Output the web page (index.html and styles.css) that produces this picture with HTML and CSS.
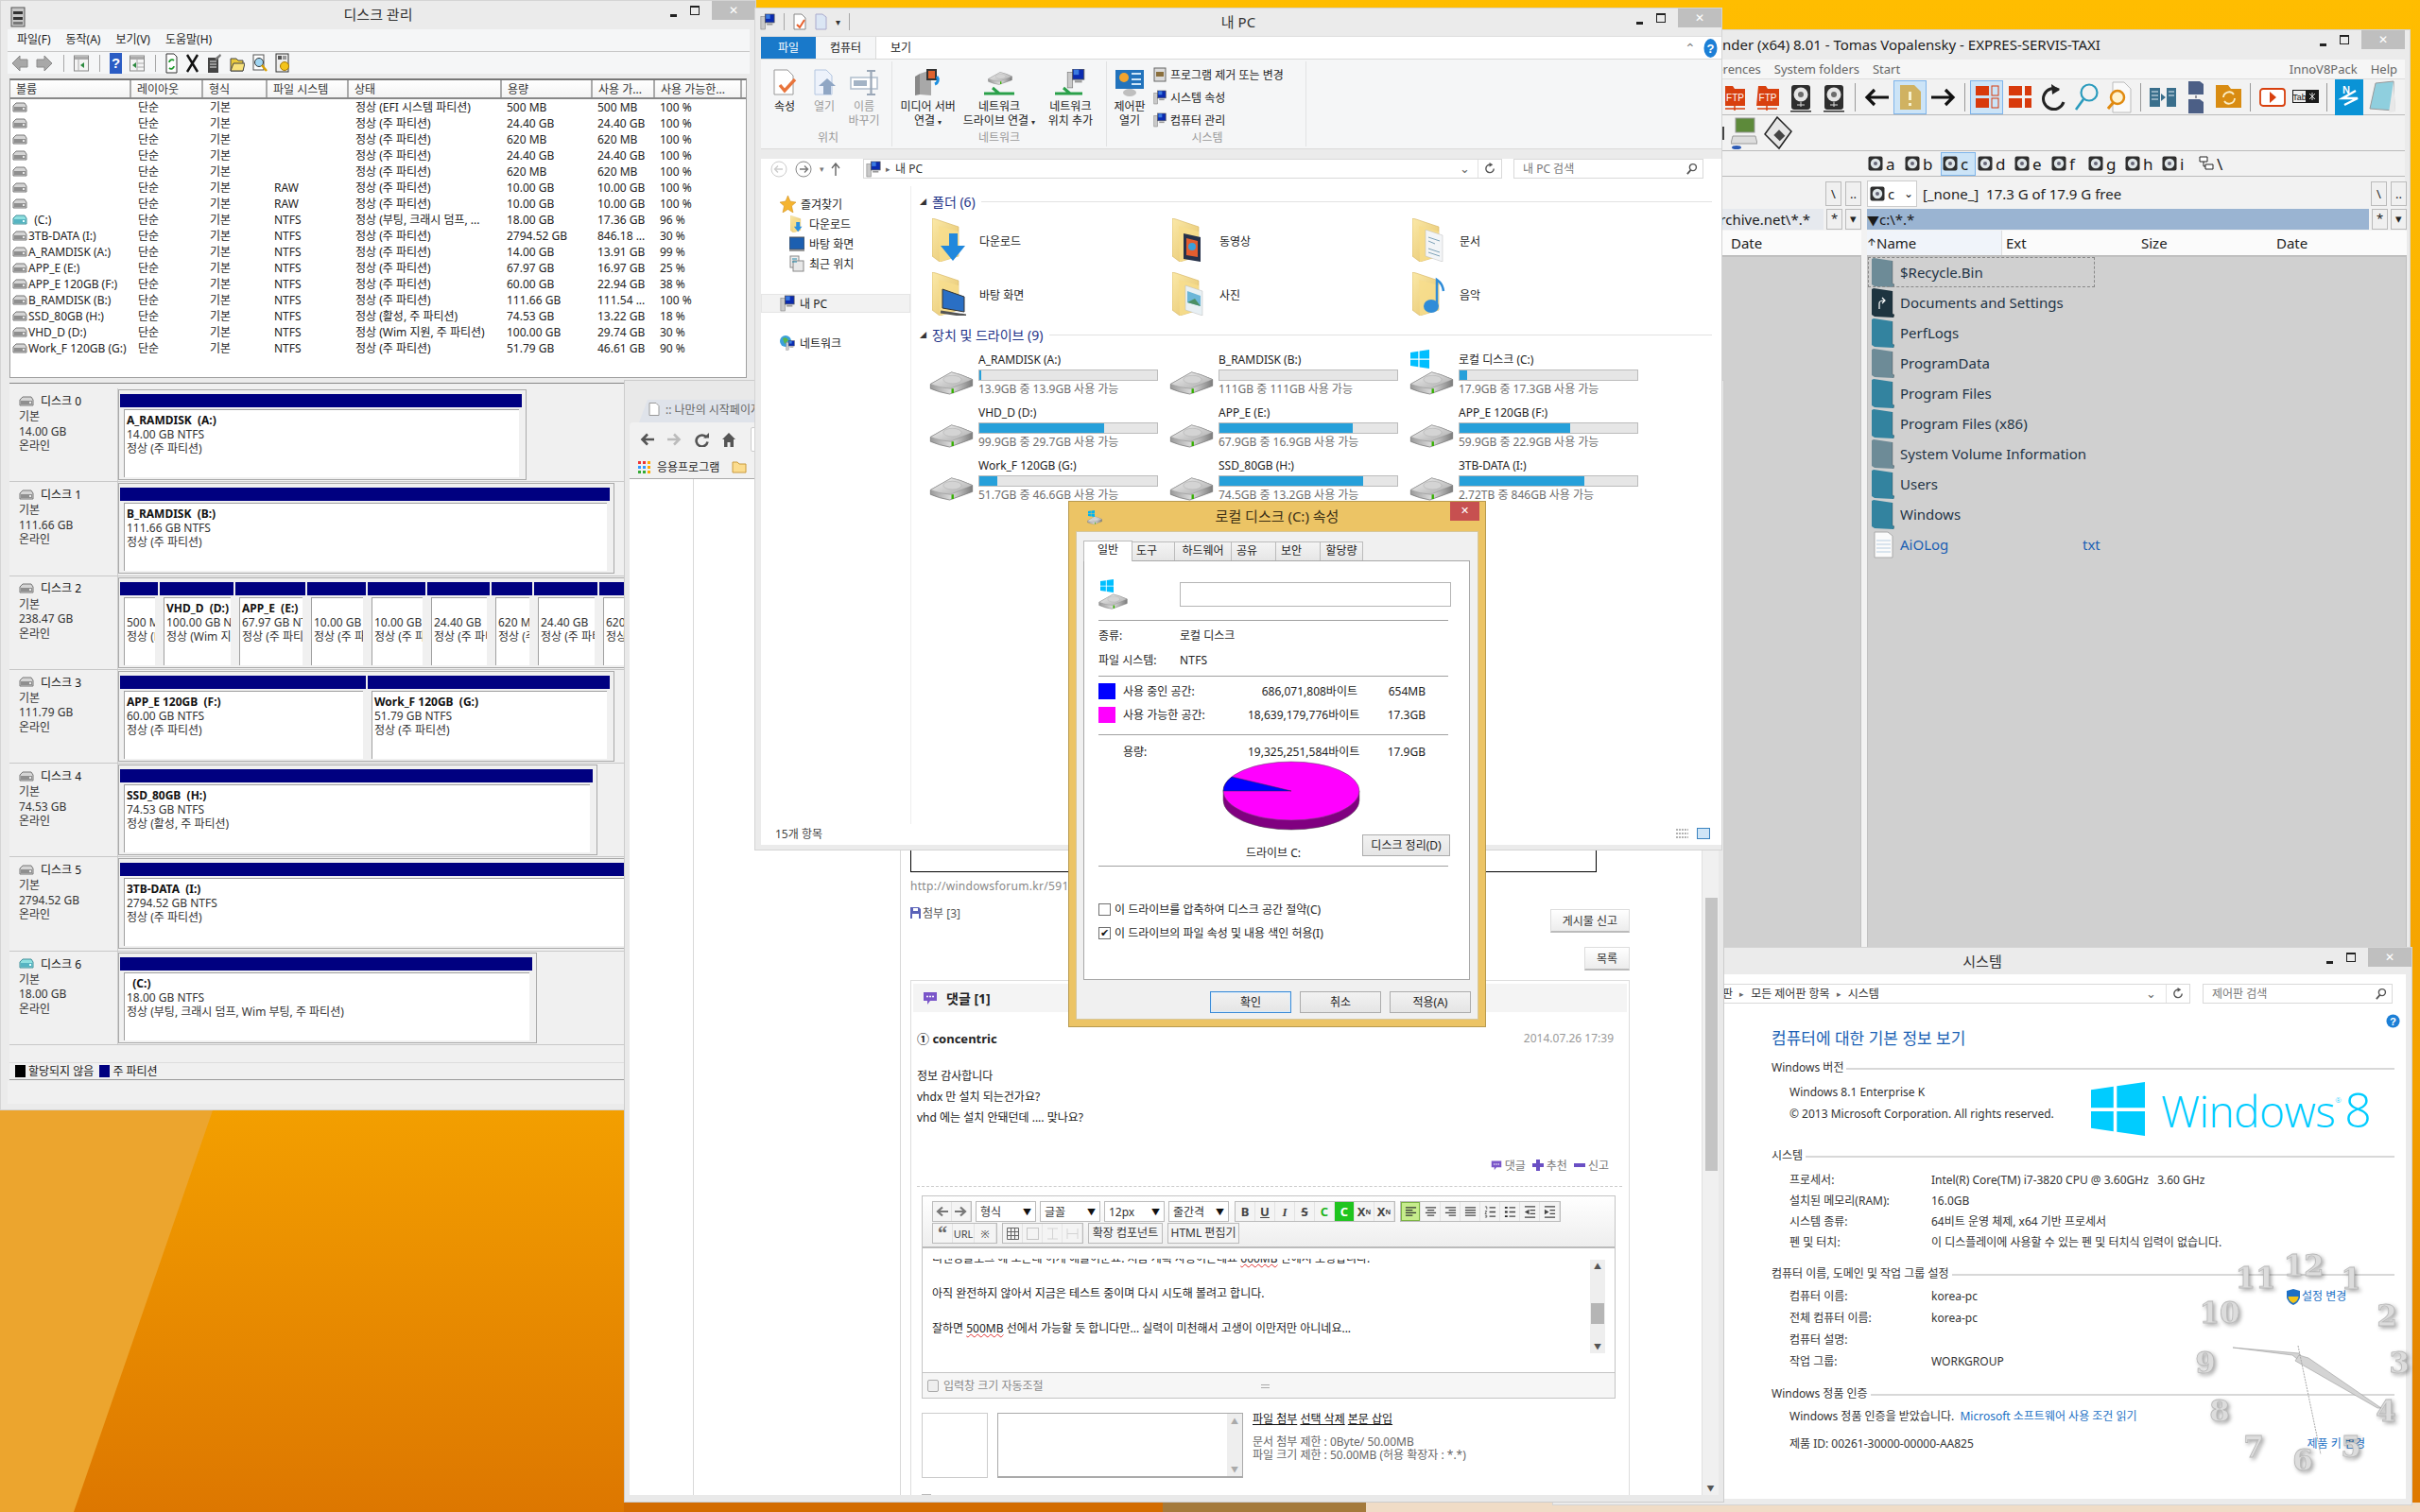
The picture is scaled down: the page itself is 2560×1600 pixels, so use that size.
FILE: index.html
```html
<!DOCTYPE html>
<html lang="ko">
<head>
<meta charset="utf-8">
<title>Desktop</title>
<link rel="stylesheet" href="styles.css">
</head>
<body>
<svg class="defs" width="0" height="0" aria-hidden="true">
  <defs>
    <linearGradient id="gTop" x1="0" y1="0" x2="1" y2="1"><stop offset="0" stop-color="#f4f4f4"/><stop offset="1" stop-color="#a9a9a9"/></linearGradient>
    <linearGradient id="gSide" x1="0" y1="0" x2="1" y2="0"><stop offset="0" stop-color="#9a9a9a"/><stop offset=".5" stop-color="#dcdcdc"/><stop offset="1" stop-color="#7d7d7d"/></linearGradient>
    <linearGradient id="gFold" x1="0" y1="0" x2="1" y2="1"><stop offset="0" stop-color="#fbe9a8"/><stop offset="1" stop-color="#e4c26a"/></linearGradient>
    <symbol id="drive" viewBox="0 0 48 28">
      <path d="M1 16 L24 3 Q34 5 47 11 L47 18 L22 27 Q10 25 1 21Z" fill="url(#gSide)" stroke="#6b6b6b" stroke-width=".7"/>
      <path d="M1 16 L24 3 Q34 5 47 11 L23 21 Q10 20 1 16Z" fill="url(#gTop)" stroke="#8a8a8a" stroke-width=".5"/>
      <ellipse cx="25" cy="11" rx="10" ry="4.5" fill="#d4d4d4" stroke="#aaa" stroke-width=".5"/>
      <rect x="24" y="21" width="2.5" height="5" fill="#35b000"/>
    </symbol>
    <symbol id="wlogo" viewBox="0 0 48 48">
      <path d="M0 7 L20 4 V23 H0Z M23 3.500 L48 0 V23 H23Z M0 26 H20 V44 L0 41Z M23 26 H48 V48 L23 44.500Z"/>
    </symbol>
    <symbol id="hdds" viewBox="0 0 16 12">
      <path d="M1 4 L4 1 H13 L15 4 V10 H1Z" fill="#d5d5d5" stroke="#777"/>
      <rect x="2" y="5" width="12" height="4" fill="#8f8f8f"/><rect x="11" y="6" width="2" height="2" fill="#e8e8e8"/>
    </symbol>
    <symbol id="hddc" viewBox="0 0 16 12">
      <path d="M1 4 L4 1 H13 L15 4 V10 H1Z" fill="#8fe0e0" stroke="#3e8e9a"/>
      <rect x="2" y="5" width="12" height="4" fill="#56b4c2"/><rect x="11" y="6" width="2" height="2" fill="#e8ffff"/>
    </symbol>
    <symbol id="folder" viewBox="0 0 36 46">
      <path d="M0 0 L4 1 L28 9 V40 L8 46 L0 40Z" fill="url(#gFold)" stroke="#d3b25e" stroke-width=".6"/>
      <path d="M7 8 L28 14 V40 L8 46Z" fill="#f7dd8c" opacity=".85"/>
    </symbol>
    <symbol id="tcfolder" viewBox="0 0 24 31">
      <path d="M0 1 L2 0 L22 3 V27 L24 28 L23 31 L3 30 L0 28Z" fill="currentColor"/>
      <path d="M22 3 V27 L24 28 L23 31" fill="none" stroke="#111" stroke-opacity=".25"/>
    </symbol>
    <symbol id="hddb" viewBox="0 0 22 28">
      <rect x="1" y="1" width="20" height="26" rx="3" fill="#2e2e2e"/>
      <circle cx="11" cy="11" r="7.500" fill="#e6e6e6"/><circle cx="11" cy="11" r="3" fill="#6b6b6b"/>
      <path d="M7 22 H15 M11 19 V24" stroke="#ddd"/>
    </symbol>
    <symbol id="hddm" viewBox="0 0 16 16">
      <rect x=".5" y=".5" width="15" height="15" rx="2" fill="#2f2f2f"/>
      <circle cx="8" cy="8" r="5.200" fill="#dfe6e8"/><circle cx="8" cy="8" r="2" fill="#667"/>
    </symbol>
    <symbol id="a-l" viewBox="0 0 14 14"><path d="M1 2 H13 M1 5 H9 M1 8 H13 M1 11 H9" stroke="#333" stroke-width="1.400" fill="none"/></symbol>
    <symbol id="a-c" viewBox="0 0 14 14"><path d="M1 2 H13 M3 5 H11 M1 8 H13 M3 11 H11" stroke="#444" stroke-width="1.400" fill="none"/></symbol>
    <symbol id="a-r" viewBox="0 0 14 14"><path d="M1 2 H13 M5 5 H13 M1 8 H13 M5 11 H13" stroke="#444" stroke-width="1.400" fill="none"/></symbol>
    <symbol id="a-j" viewBox="0 0 14 14"><path d="M1 2 H13 M1 5 H13 M1 8 H13 M1 11 H13" stroke="#444" stroke-width="1.400" fill="none"/></symbol>
    <symbol id="a-o" viewBox="0 0 14 14"><path d="M6 2 H13 M6 7 H13 M6 12 H13" stroke="#444" stroke-width="1.400" fill="none"/><path d="M1 1 H3 V4 M1 6 H3 L1 9 H3 M1 11 H3 V13 H1" stroke="#444" fill="none" stroke-width=".8"/></symbol>
    <symbol id="a-u" viewBox="0 0 14 14"><path d="M6 2 H13 M6 7 H13 M6 12 H13" stroke="#444" stroke-width="1.400" fill="none"/><path d="M1 1 H4 V3 H1Z M1 6 H4 V8 H1Z M1 11 H4 V13 H1Z" fill="#222"/></symbol>
    <symbol id="a-d" viewBox="0 0 14 14"><path d="M1 1 H13 M7 5 H13 M7 9 H13 M1 13 H13" stroke="#444" stroke-width="1.200" fill="none"/><path d="M6 4 L1 7 L6 10Z" fill="#444"/></symbol>
    <symbol id="a-i" viewBox="0 0 14 14"><path d="M1 1 H13 M7 5 H13 M7 9 H13 M1 13 H13" stroke="#444" stroke-width="1.200" fill="none"/><path d="M1 4 L6 7 L1 10Z" fill="#444"/></symbol>
    <symbol id="pc" viewBox="0 0 18 20">
      <rect x="1" y="4" width="5" height="15" fill="#c9c9c9" stroke="#777" stroke-width=".6"/>
      <rect x="6" y="1" width="11" height="10" fill="#0a2bb0" stroke="#555" stroke-width=".8"/>
      <rect x="7" y="1.500" width="5" height="5" fill="#3a7ae0"/><rect x="8" y="12" width="7" height="2" fill="#999"/>
    </symbol>
    <symbol id="search" viewBox="0 0 14 14"><circle cx="8.500" cy="5.500" r="3.800" fill="none" stroke="#555" stroke-width="1.500"/><path d="M6 8.500 L2 13" stroke="#555" stroke-width="2"/></symbol>
    <symbol id="refresh" viewBox="0 0 14 14"><path d="M11 7 A4.500 4.500 0 1 1 7 2.500" fill="none" stroke="#555" stroke-width="1.500"/><path d="M6 0 L10 2.500 L6 5Z" fill="#555"/></symbol>
    <symbol id="bubble" viewBox="0 0 16 16"><path d="M1 2 H15 V11 H8 L5 15 V11 H1Z" fill="#7a55c9"/><circle cx="5" cy="6.500" r="1" fill="#fff"/><circle cx="8" cy="6.500" r="1" fill="#fff"/><circle cx="11" cy="6.500" r="1" fill="#fff"/></symbol>
    <symbol id="help" viewBox="0 0 16 16"><circle cx="8" cy="8" r="7.500" fill="#1c7fd6"/><text x="8" y="12.500" text-anchor="middle" font-size="12" font-weight="700" fill="#fff" font-family="Liberation Sans">?</text></symbol>
  </defs>
</svg>

<main class="desktop">
  <svg class="wallpaper" viewBox="0 0 2560 1600" aria-hidden="true">
    <defs><linearGradient id="wall" x1="0" y1="0" x2="0" y2="1"><stop offset="0" stop-color="#ffbd00"/><stop offset=".72" stop-color="#f4a100"/><stop offset="1" stop-color="#dd7700"/></linearGradient></defs>
    <rect width="2560" height="1600" fill="url(#wall)"/>
    <path d="M0 1175 H225 L78 1600 H0Z" fill="#eca52e"/>
    <rect x="660" y="1590" width="570" height="10" fill="#d36c00"/>
    <rect x="1230" y="1590" width="215" height="10" fill="#a47a3c"/>
    <rect x="1445" y="1590" width="1115" height="10" fill="#f0dcc6"/>
  </svg>

  <!-- Total Commander -->
  <section class="win win-tc">
    <header class="tc-cap">
      <span class="tc-title">Total Commander (x64) 8.01 - Tomas Vopalensky - EXPRES-SERVIS-TAXI</span>
      <span class="capbtns"><i class="cb-min"></i><i class="cb-max"></i><i class="cb-close">✕</i></span>
    </header>
    <nav class="tc-menu"><span>Files</span><span>Mark</span><span>Preferences</span><span>System folders</span><span>Start</span><span class="grow"></span><span>InnoV8Pack</span><span>Help</span></nav>
    <div class="tc-tools">
      <span class="tool"><svg width="24" height="30" viewBox="0 0 24 30"><path d="M2 3 H10 L12 6 H23 V24 H2Z" fill="#d8400e"/><text x="12.500" y="19" text-anchor="middle" font-size="10" fill="#fff" font-family="Liberation Sans">FTP</text><path d="M2 27 H23 M12 24 V29" stroke="#d8400e" stroke-width="1.500"/></svg></span>
      <span class="tool"><svg width="26" height="30" viewBox="0 0 26 30"><path d="M3 3 H11 L13 6 H25 V24 H1Z" fill="#d8400e"/><text x="13" y="19" text-anchor="middle" font-size="10" fill="#fff" font-family="Liberation Sans">FTP</text><path d="M2 27 H23 M12 24 V29" stroke="#d8400e" stroke-width="1.500"/></svg></span>
      <span class="tool"><svg width="22" height="32"><use href="#hddb"/><rect y="30" width="22" height="1.500" fill="#333"/></svg></span>
      <span class="tool"><svg width="22" height="32"><use href="#hddb"/><rect y="30" width="22" height="1.500" fill="#333"/></svg></span>
      <span class="tsep"></span>
      <span class="tool"><svg width="27" height="20" viewBox="0 0 27 20"><path d="M26 10 H3 M11 2 L3 10 L11 18" fill="none" stroke="#111" stroke-width="3.200"/></svg></span>
      <span class="tool on"><svg width="24" height="28" viewBox="0 0 24 28"><path d="M1 1 H16 L23 8 V27 H1Z" fill="#d0b261"/><path d="M10 8 H13 V17 H10Z M10 20 H13 V23 H10Z" fill="#f7f2d0"/></svg></span>
      <span class="tool"><svg width="27" height="20" viewBox="0 0 27 20"><path d="M1 10 H24 M16 2 L24 10 L16 18" fill="none" stroke="#111" stroke-width="3.200"/></svg></span>
      <span class="tsep"></span>
      <span class="tool on"><svg width="26" height="26" viewBox="0 0 26 26"><rect x="1" y="1" width="14" height="10" fill="#d83a0c"/><rect x="1" y="14" width="14" height="10" fill="#d83a0c"/><rect x="18" y="1" width="7" height="10" fill="none" stroke="#d83a0c"/><rect x="18" y="14" width="7" height="10" fill="none" stroke="#d83a0c"/></svg></span>
      <span class="tool"><svg width="26" height="26" viewBox="0 0 26 26"><rect x="1" y="1" width="14" height="10" fill="#d83a0c"/><rect x="1" y="14" width="14" height="10" fill="#d83a0c"/><rect x="18" y="1" width="7" height="10" fill="#d83a0c"/><rect x="18" y="14" width="7" height="10" fill="#d83a0c"/></svg></span>
      <span class="tool"><svg width="27" height="30" viewBox="0 0 27 30"><path d="M20 7 A11 11 0 1 0 25 20" fill="none" stroke="#222" stroke-width="3"/><path d="M12 1 L21 7 L13 12Z" fill="#222"/></svg></span>
      <span class="tool"><svg width="26" height="32" viewBox="0 0 26 32"><circle cx="16" cy="11" r="8.500" fill="none" stroke="#2a9bbd" stroke-width="2.200"/><path d="M10 18 L2 29" stroke="#2a9bbd" stroke-width="2.600"/></svg></span>
      <span class="tool"><svg width="26" height="34" viewBox="0 0 26 34"><path d="M6 1 H18 L25 8 V33 H6Z" fill="#fafafa" stroke="#bbb"/><circle cx="11" cy="17" r="7" fill="#fff3d0" stroke="#e08a10" stroke-width="2.500"/><path d="M7 22 L1 29" stroke="#e08a10" stroke-width="3"/></svg></span>
      <span class="tsep"></span>
      <span class="tool"><svg width="30" height="24" viewBox="0 0 30 24"><rect x="1" y="2" width="11" height="20" fill="#3a6f8c"/><rect x="19" y="2" width="10" height="20" fill="#3a6f8c"/><path d="M3 6 H10 M3 10 H10 M3 14 H10 M21 6 H27 M21 10 H27" stroke="#e4eef4"/><path d="M13 8 L18 12 L13 16Z" fill="#3a6f8c"/></svg></span>
      <span class="tool"><svg width="20" height="36" viewBox="0 0 20 36"><path d="M2 1 H14 L18 4 V15 H2Z M2 20 H14 L18 23 V35 H2Z" fill="#4c5f86"/><path d="M10 16 V19" stroke="#334"/></svg></span>
      <span class="tool"><svg width="30" height="32" viewBox="0 0 30 32"><path d="M1 3 H14 L17 7 H28 V27 H1Z" fill="#d98c12"/><path d="M9 16 A6 6 0 0 1 20 13 M21 17 A6 6 0 0 1 10 20" fill="none" stroke="#fbeec6" stroke-width="1.800"/></svg></span>
      <span class="tsep"></span>
      <span class="tool"><svg width="28" height="22" viewBox="0 0 28 22"><rect x="1" y="2" width="26" height="18" rx="3" fill="#fff" stroke="#d8400e" stroke-width="1.800"/><path d="M11 5 L18 11 L11 17Z" fill="#d8400e"/></svg></span>
      <span class="tool"><svg width="28" height="16" viewBox="0 0 28 16"><rect width="28" height="14" fill="#1a1a1a"/><rect x="1" y="1" width="13" height="12" fill="#eee"/><text x="7.500" y="11" text-anchor="middle" font-size="9" font-family="Liberation Sans" fill="#111">Tab</text><path d="M18 4 L24 10 M24 4 L18 10 M21 3 V11" stroke="#ddd"/></svg></span>
      <span class="tsep"></span>
      <span class="tool"><svg width="30" height="38" viewBox="0 0 30 38"><rect width="30" height="38" fill="#0a93d6"/><text x="8" y="15" font-size="11" font-weight="700" fill="#fff" font-family="Liberation Sans">N</text><path d="M22 12 L8 20 H24 L10 27" fill="none" stroke="#fff" stroke-width="2.500"/></svg></span>
      <span class="tool"><svg width="30" height="36" viewBox="0 0 30 36"><path d="M8 3 L27 1 L28 32 L2 30Z" fill="#8fcfde" stroke="#999"/><path d="M27 1 L29 33 L22 34" fill="#e8e8e8"/></svg></span>
    </div>
    <div class="tc-tools2">
      <span class="tool"><svg width="4" height="14"><rect width="4" height="14" fill="#444"/></svg></span>
      <span class="tool2"><svg width="28" height="34" viewBox="0 0 28 34"><rect x="5" y="1" width="20" height="15" fill="#5d8a3a" stroke="#999"/><path d="M2 20 H26 L28 28 H0Z" fill="#ddd" stroke="#999"/><ellipse cx="6" cy="32" rx="5" ry="2" fill="#2d5bb5"/></svg></span>
      <span class="tool2"><svg width="30" height="36" viewBox="0 0 30 36"><path d="M14 1 L29 16 L16 34 L1 19Z" fill="#e6e6e6" stroke="#222" stroke-width="1.500"/><rect x="12" y="16" width="9" height="8" fill="#444" transform="rotate(45 16 20)"/></svg></span>
    </div>
    <div class="tc-drives">
      <span class="drv"><svg width="16" height="16"><use href="#hddm"/></svg>a</span>
      <span class="drv"><svg width="16" height="16"><use href="#hddm"/></svg>b</span>
      <span class="drv on"><svg width="16" height="16"><use href="#hddm"/></svg>c</span>
      <span class="drv"><svg width="16" height="16"><use href="#hddm"/></svg>d</span>
      <span class="drv"><svg width="16" height="16"><use href="#hddm"/></svg>e</span>
      <span class="drv"><svg width="16" height="16"><use href="#hddm"/></svg>f</span>
      <span class="drv"><svg width="16" height="16"><use href="#hddm"/></svg>g</span>
      <span class="drv"><svg width="16" height="16"><use href="#hddm"/></svg>h</span>
      <span class="drv"><svg width="16" height="16"><use href="#hddm"/></svg>i</span>
      <span class="drv"><svg width="16" height="16" viewBox="0 0 16 16"><path d="M1 1 H9 V6 H1Z M7 9 H15 V14 H7Z M5 6 V11 H7" fill="#fff" stroke="#222"/></svg>\</span>
    </div>
    <div class="tc-panels">
      <section class="tc-panel tc-left">
        <div class="tc-pathrow"><span class="grow"></span><span class="sq">\</span><span class="sq">..</span></div>
        <div class="tc-pathbar"><span class="tc-path off">ftp://web.archive.net\*.*</span><span class="sq">*</span><span class="sq">▾</span></div>
        <div class="tc-cols left-cols"><span>Date</span></div>
        <div class="tc-list"></div>
      </section>
      <section class="tc-panel tc-right">
        <div class="tc-pathrow"><span class="tc-combo"><svg width="16" height="16"><use href="#hddm"/></svg>c<em>⌄</em></span><span class="tc-free">[_none_]&nbsp; 17.3 G of 17.9 G free</span><span class="grow"></span><span class="sq">\</span><span class="sq">..</span></div>
        <div class="tc-pathbar"><span class="tc-path"><b>▼</b>c:\*.*</span><span class="sq">*</span><span class="sq">▾</span></div>
        <div class="tc-cols right-cols"><span class="sorted"><b>🡩</b>Name</span><span>Ext</span><span>Size</span><span>Date</span></div>
        <div class="tc-list">
          <div class="tc-row focus"><svg class="gr" width="24" height="31"><use href="#tcfolder"/></svg>$Recycle.Bin</div>
          <div class="tc-row"><svg class="dk" width="24" height="31"><use href="#tcfolder"/><path d="M8 22 V16 Q8 13 13 13 M11 10 L14 13 L11 16" fill="none" stroke="#fff" stroke-width="1.200"/></svg>Documents and Settings</div>
          <div class="tc-row"><svg class="tl" width="24" height="31"><use href="#tcfolder"/></svg>PerfLogs</div>
          <div class="tc-row"><svg class="gr" width="24" height="31"><use href="#tcfolder"/></svg>ProgramData</div>
          <div class="tc-row"><svg class="tl" width="24" height="31"><use href="#tcfolder"/></svg>Program Files</div>
          <div class="tc-row"><svg class="tl" width="24" height="31"><use href="#tcfolder"/></svg>Program Files (x86)</div>
          <div class="tc-row"><svg class="gr" width="24" height="31"><use href="#tcfolder"/></svg>System Volume Information</div>
          <div class="tc-row"><svg class="tl" width="24" height="31"><use href="#tcfolder"/></svg>Users</div>
          <div class="tc-row"><svg class="tl" width="24" height="31"><use href="#tcfolder"/></svg>Windows</div>
          <div class="tc-row file"><svg width="24" height="31" viewBox="0 0 24 31"><path d="M3 2 H17 L22 6 V29 H3Z" fill="#fbfbfb" stroke="#aaa"/><path d="M5 11 H20 M5 15 H20 M5 19 H20 M5 23 H20" stroke="#b7cde0"/></svg><span class="tc-name">AiOLog</span><span class="tc-ext">txt</span></div>
        </div>
      </section>
    </div>
  </section>

  <!-- System -->
  <section class="win win-sys">
    <header class="cap sys-cap">
      <span></span><span class="cap-title">시스템</span>
      <span class="capbtns"><i class="cb-min"></i><i class="cb-max"></i><i class="cb-close">✕</i></span>
    </header>
    <div class="sys-client">
      <div class="sys-addr">
        <div class="sys-crumb"><span>제어판</span><em>▸</em><span>모든 제어판 항목</span><em>▸</em><span>시스템</span><span class="grow"></span><em class="dd">⌄</em><span class="rf"><svg width="13" height="13"><use href="#refresh"/></svg></span></div>
        <div class="sys-search"><span>제어판 검색</span><svg width="13" height="13"><use href="#search"/></svg></div>
      </div>
      <div class="sys-main">
        <div class="sys-h1row"><h1 class="sys-h1">컴퓨터에 대한 기본 정보 보기</h1><svg class="sys-help" width="15" height="17"><use href="#help"/></svg></div>
        <div class="sys-sec s1"><span>Windows 버전</span></div>
        <div class="sys-ver">
          <div class="sys-vertext"><p>Windows 8.1 Enterprise K</p><p>© 2013 Microsoft Corporation. All rights reserved.</p></div>
          <svg class="win8logo" width="57" height="57"><use href="#wlogo"/></svg>
          <span class="win8text">Windows<sup>®</sup><b>8</b></span>
        </div>
        <div class="sys-sec s2"><span>시스템</span></div>
        <dl class="sys-rows tight"><dt>프로세서:</dt><dd>Intel(R) Core(TM) i7-3820 CPU @ 3.60GHz &nbsp; 3.60 GHz</dd><dt>설치된 메모리(RAM):</dt><dd>16.0GB</dd><dt>시스템 종류:</dt><dd>64비트 운영 체제, x64 기반 프로세서</dd><dt>펜 및 터치:</dt><dd>이 디스플레이에 사용할 수 있는 펜 및 터치식 입력이 없습니다.</dd></dl>
        <div class="sys-sec s3"><span>컴퓨터 이름, 도메인 및 작업 그룹 설정</span></div>
        <dl class="sys-rows"><dt>컴퓨터 이름:</dt><dd>korea-pc<a class="sys-link shield"><svg width="14" height="17" viewBox="0 0 14 17"><path d="M7 0 L14 2 V9 Q13 14 7 17 Q1 14 0 9 V2Z" fill="#1e6fc4"/><path d="M7 2 V15 Q2 13 1.500 8 H7Z M7 8 H12.500 Q12 13 7 15Z" fill="#f4c518"/></svg>설정 변경</a></dd><dt>전체 컴퓨터 이름:</dt><dd>korea-pc</dd><dt>컴퓨터 설명:</dt><dd>&nbsp;</dd><dt>작업 그룹:</dt><dd>WORKGROUP</dd></dl>
        <div class="sys-sec s4"><span>Windows 정품 인증</span></div>
        <p class="sys-act">Windows 정품 인증을 받았습니다. &nbsp;<a class="sys-link">Microsoft 소프트웨어 사용 조건 읽기</a></p>
        <p class="sys-pid"><span>제품 ID: 00261-30000-00000-AA825</span><a class="sys-link">제품 키 변경</a></p>
      </div>
    </div>
  </section>

  <!-- Disk management -->
  <section class="win win-disk">
    <header class="cap">
      <span class="cap-ico"><svg width="16" height="24" viewBox="0 0 16 24"><rect x="1" y="2" width="14" height="20" fill="#c8c8c8" stroke="#555"/><rect x="3" y="6" width="10" height="3" fill="#333"/><rect x="3" y="12" width="10" height="3" fill="#333"/><rect x="3" y="17" width="10" height="3" fill="#777"/></svg></span>
      <span class="cap-title">디스크 관리</span>
      <span class="capbtns"><i class="cb-min"></i><i class="cb-max"></i><i class="cb-close">✕</i></span>
    </header>
    <nav class="menubar"><span>파일(F)</span><span>동작(A)</span><span>보기(V)</span><span>도움말(H)</span></nav>
    <div class="dm-tools">
      <svg width="18" height="20" viewBox="0 0 18 20"><path d="M1 10 L9 2 V6 H17 V14 H9 V18Z" fill="#a8a8a8" stroke="#8a8a8a"/></svg>
      <svg width="18" height="20" viewBox="0 0 18 20"><path d="M17 10 L9 2 V6 H1 V14 H9 V18Z" fill="#a8a8a8" stroke="#8a8a8a"/></svg>
      <i class="vs"></i>
      <svg width="16" height="18" viewBox="0 0 16 18"><rect x=".5" y="1" width="15" height="16" fill="#f4f4f4" stroke="#888"/><rect x="1" y="2" width="14" height="3" fill="#aaa"/><path d="M5 5 V17" stroke="#aaa"/><path d="M7 11 L11 8 V14Z" fill="#2b8a3e"/></svg>
      <i class="vs"></i>
      <svg width="13" height="22" viewBox="0 0 13 22"><rect width="13" height="22" fill="#2a5cc4"/><text x="6.500" y="16" text-anchor="middle" font-size="15" font-weight="700" fill="#fff" font-family="Liberation Sans">?</text></svg>
      <svg width="16" height="18" viewBox="0 0 16 18"><rect x=".5" y="1" width="15" height="16" fill="#f4f4f4" stroke="#888"/><rect x="1" y="2" width="14" height="3" fill="#aaa"/><path d="M8 5 V17 M8 9 H15 M8 13 H15" stroke="#aaa"/><path d="M7 8 L3 11 L7 14Z" fill="#2b8a3e"/></svg>
      <i class="vs"></i>
      <svg width="13" height="22" viewBox="0 0 13 22"><path d="M1 1 H9 L12 4 V21 H1Z" fill="#fff" stroke="#333"/><path d="M4 10 A3 3 0 0 1 9 8 M9 14 A3 3 0 0 1 4 16" fill="none" stroke="#1f9b2d" stroke-width="1.800"/></svg>
      <svg width="15" height="22" viewBox="0 0 15 22"><path d="M2 2 L13 20 M13 2 L2 20" stroke="#111" stroke-width="2.400"/></svg>
      <svg width="16" height="22" viewBox="0 0 16 22"><rect x="1" y="5" width="11" height="16" fill="#444"/><path d="M3 9 H10 M3 12 H10 M3 15 H10" stroke="#eee"/><path d="M8 6 L14 1 L15 3 L10 8Z" fill="#777"/></svg>
      <svg width="16" height="20" viewBox="0 0 16 20"><path d="M1 5 H7 L9 7 H14 V18 H1Z" fill="#e9c93a" stroke="#444"/><path d="M1 18 L4 10 H16 L14 18Z" fill="#f8e27a" stroke="#444"/></svg>
      <svg width="16" height="20" viewBox="0 0 16 20"><rect x="1" y="1" width="11" height="16" fill="#fff" stroke="#555"/><circle cx="7" cy="9" r="4.500" fill="#9fd5f2" stroke="#333"/><path d="M10 12 L15 18" stroke="#d9a000" stroke-width="2.400"/></svg>
      <svg width="16" height="22" viewBox="0 0 16 22"><rect x="1" y="1" width="13" height="19" fill="#eee" stroke="#333"/><rect x="3" y="3" width="4" height="4" fill="#555"/><rect x="8" y="3" width="4" height="4" fill="#999"/><circle cx="10" cy="14" r="4.500" fill="#f3c41c" stroke="#a87800"/></svg>
    </div>
    <div class="lv">
      <div class="lv-head lv-grid"><span>볼륨</span><span>레이아웃</span><span>형식</span><span>파일 시스템</span><span>상태</span><span>용량</span><span>사용 가...</span><span>사용 가능한...</span></div>
      <div class="lv-grid lv-row"><span class="vol"><svg width="16" height="12"><use href="#hdds"/></svg></span><span>단순</span><span>기본</span><span></span><span>정상 (EFI 시스템 파티션)</span><span>500 MB</span><span>500 MB</span><span>100 %</span></div>
      <div class="lv-grid lv-row"><span class="vol"><svg width="16" height="12"><use href="#hdds"/></svg></span><span>단순</span><span>기본</span><span></span><span>정상 (주 파티션)</span><span>24.40 GB</span><span>24.40 GB</span><span>100 %</span></div>
      <div class="lv-grid lv-row"><span class="vol"><svg width="16" height="12"><use href="#hdds"/></svg></span><span>단순</span><span>기본</span><span></span><span>정상 (주 파티션)</span><span>620 MB</span><span>620 MB</span><span>100 %</span></div>
      <div class="lv-grid lv-row"><span class="vol"><svg width="16" height="12"><use href="#hdds"/></svg></span><span>단순</span><span>기본</span><span></span><span>정상 (주 파티션)</span><span>24.40 GB</span><span>24.40 GB</span><span>100 %</span></div>
      <div class="lv-grid lv-row"><span class="vol"><svg width="16" height="12"><use href="#hdds"/></svg></span><span>단순</span><span>기본</span><span></span><span>정상 (주 파티션)</span><span>620 MB</span><span>620 MB</span><span>100 %</span></div>
      <div class="lv-grid lv-row"><span class="vol"><svg width="16" height="12"><use href="#hdds"/></svg></span><span>단순</span><span>기본</span><span>RAW</span><span>정상 (주 파티션)</span><span>10.00 GB</span><span>10.00 GB</span><span>100 %</span></div>
      <div class="lv-grid lv-row"><span class="vol"><svg width="16" height="12"><use href="#hdds"/></svg></span><span>단순</span><span>기본</span><span>RAW</span><span>정상 (주 파티션)</span><span>10.00 GB</span><span>10.00 GB</span><span>100 %</span></div>
      <div class="lv-grid lv-row"><span class="vol"><svg width="16" height="12"><use href="#hddc"/></svg>&nbsp;&nbsp;(C:)</span><span>단순</span><span>기본</span><span>NTFS</span><span>정상 (부팅, 크래시 덤프, ...</span><span>18.00 GB</span><span>17.36 GB</span><span>96 %</span></div>
      <div class="lv-grid lv-row"><span class="vol"><svg width="16" height="12"><use href="#hdds"/></svg>3TB-DATA (I:)</span><span>단순</span><span>기본</span><span>NTFS</span><span>정상 (주 파티션)</span><span>2794.52 GB</span><span>846.18 ...</span><span>30 %</span></div>
      <div class="lv-grid lv-row"><span class="vol"><svg width="16" height="12"><use href="#hdds"/></svg>A_RAMDISK (A:)</span><span>단순</span><span>기본</span><span>NTFS</span><span>정상 (주 파티션)</span><span>14.00 GB</span><span>13.91 GB</span><span>99 %</span></div>
      <div class="lv-grid lv-row"><span class="vol"><svg width="16" height="12"><use href="#hdds"/></svg>APP_E (E:)</span><span>단순</span><span>기본</span><span>NTFS</span><span>정상 (주 파티션)</span><span>67.97 GB</span><span>16.97 GB</span><span>25 %</span></div>
      <div class="lv-grid lv-row"><span class="vol"><svg width="16" height="12"><use href="#hdds"/></svg>APP_E 120GB (F:)</span><span>단순</span><span>기본</span><span>NTFS</span><span>정상 (주 파티션)</span><span>60.00 GB</span><span>22.94 GB</span><span>38 %</span></div>
      <div class="lv-grid lv-row"><span class="vol"><svg width="16" height="12"><use href="#hdds"/></svg>B_RAMDISK (B:)</span><span>단순</span><span>기본</span><span>NTFS</span><span>정상 (주 파티션)</span><span>111.66 GB</span><span>111.54 ...</span><span>100 %</span></div>
      <div class="lv-grid lv-row"><span class="vol"><svg width="16" height="12"><use href="#hdds"/></svg>SSD_80GB (H:)</span><span>단순</span><span>기본</span><span>NTFS</span><span>정상 (활성, 주 파티션)</span><span>74.53 GB</span><span>13.22 GB</span><span>18 %</span></div>
      <div class="lv-grid lv-row"><span class="vol"><svg width="16" height="12"><use href="#hdds"/></svg>VHD_D (D:)</span><span>단순</span><span>기본</span><span>NTFS</span><span>정상 (Wim 지원, 주 파티션)</span><span>100.00 GB</span><span>29.74 GB</span><span>30 %</span></div>
      <div class="lv-grid lv-row"><span class="vol"><svg width="16" height="12"><use href="#hdds"/></svg>Work_F 120GB (G:)</span><span>단순</span><span>기본</span><span>NTFS</span><span>정상 (주 파티션)</span><span>51.79 GB</span><span>46.61 GB</span><span>90 %</span></div>
    </div>
    <div class="dm-pane">
      <div class="disk"><div class="disk-info"><b><svg width="16" height="12"><use href="#hdds"/></svg>디스크 0</b><span>기본</span><span>14.00 GB</span><span>온라인</span></div>
        <div class="frame"><div class="part" style="width:425px"><i class="bar"></i><div class="pbox"><b>A_RAMDISK &nbsp;(A:)</b><span>14.00 GB NTFS</span><span>정상 (주 파티션)</span></div></div></div></div>
      <div class="disk"><div class="disk-info"><b><svg width="16" height="12"><use href="#hdds"/></svg>디스크 1</b><span>기본</span><span>111.66 GB</span><span>온라인</span></div>
        <div class="frame"><div class="part" style="width:518px"><i class="bar"></i><div class="pbox"><b>B_RAMDISK &nbsp;(B:)</b><span>111.66 GB NTFS</span><span>정상 (주 파티션)</span></div></div></div></div>
      <div class="disk"><div class="disk-info"><b><svg width="16" height="12"><use href="#hdds"/></svg>디스크 2</b><span>기본</span><span>238.47 GB</span><span>온라인</span></div>
        <div class="frame">
          <div class="part" style="width:40px"><i class="bar"></i><div class="pbox"><b>&nbsp;</b><span>500 MB</span><span>정상 (EFI)</span></div></div>
          <div class="part" style="width:78px"><i class="bar"></i><div class="pbox"><b>VHD_D &nbsp;(D:)</b><span>100.00 GB NTFS</span><span>정상 (Wim 지원)</span></div></div>
          <div class="part" style="width:74px"><i class="bar"></i><div class="pbox"><b>APP_E &nbsp;(E:)</b><span>67.97 GB NTFS</span><span>정상 (주 파티션)</span></div></div>
          <div class="part" style="width:62px"><i class="bar"></i><div class="pbox"><b>&nbsp;</b><span>10.00 GB RAW</span><span>정상 (주 파티션)</span></div></div>
          <div class="part" style="width:61px"><i class="bar"></i><div class="pbox"><b>&nbsp;</b><span>10.00 GB RAW</span><span>정상 (주 파티션)</span></div></div>
          <div class="part" style="width:66px"><i class="bar"></i><div class="pbox"><b>&nbsp;</b><span>24.40 GB</span><span>정상 (주 파티션)</span></div></div>
          <div class="part" style="width:43px"><i class="bar"></i><div class="pbox"><b>&nbsp;</b><span>620 MB</span><span>정상 (주)</span></div></div>
          <div class="part" style="width:67px"><i class="bar"></i><div class="pbox"><b>&nbsp;</b><span>24.40 GB</span><span>정상 (주 파티션)</span></div></div>
          <div class="part" style="width:43px"><i class="bar"></i><div class="pbox"><b>&nbsp;</b><span>620 MB</span><span>정상 (주)</span></div></div>
        </div></div>
      <div class="disk"><div class="disk-info"><b><svg width="16" height="12"><use href="#hdds"/></svg>디스크 3</b><span>기본</span><span>111.79 GB</span><span>온라인</span></div>
        <div class="frame"><div class="part" style="width:260px"><i class="bar"></i><div class="pbox"><b>APP_E 120GB &nbsp;(F:)</b><span>60.00 GB NTFS</span><span>정상 (주 파티션)</span></div></div><div class="part" style="width:256px"><i class="bar"></i><div class="pbox"><b>Work_F 120GB &nbsp;(G:)</b><span>51.79 GB NTFS</span><span>정상 (주 파티션)</span></div></div></div></div>
      <div class="disk"><div class="disk-info"><b><svg width="16" height="12"><use href="#hdds"/></svg>디스크 4</b><span>기본</span><span>74.53 GB</span><span>온라인</span></div>
        <div class="frame"><div class="part" style="width:500px"><i class="bar"></i><div class="pbox"><b>SSD_80GB &nbsp;(H:)</b><span>74.53 GB NTFS</span><span>정상 (활성, 주 파티션)</span></div></div></div></div>
      <div class="disk"><div class="disk-info"><b><svg width="16" height="12"><use href="#hdds"/></svg>디스크 5</b><span>기본</span><span>2794.52 GB</span><span>온라인</span></div>
        <div class="frame"><div class="part" style="width:600px"><i class="bar"></i><div class="pbox"><b>3TB-DATA &nbsp;(I:)</b><span>2794.52 GB NTFS</span><span>정상 (주 파티션)</span></div></div></div></div>
      <div class="disk"><div class="disk-info"><b><svg width="16" height="12"><use href="#hddc"/></svg>디스크 6</b><span>기본</span><span>18.00 GB</span><span>온라인</span></div>
        <div class="frame"><div class="part" style="width:436px"><i class="bar"></i><div class="pbox"><b>&nbsp;&nbsp;(C:)</b><span>18.00 GB NTFS</span><span>정상 (부팅, 크래시 덤프, Wim 부팅, 주 파티션)</span></div></div></div></div>
      <div class="legend"><i class="k"></i><span>할당되지 않음</span><i class="b"></i><span>주 파티션</span></div>
    </div>
    <div class="dm-status"></div>
  </section>

  <!-- Chrome -->
  <section class="win win-chrome">
    <div class="ch-tabs"><div class="ch-tab"><svg width="12" height="14" viewBox="0 0 12 14"><path d="M1 .5 H8 L11 3.500 V13.500 H1Z" fill="#fff" stroke="#999"/></svg><span>:: 나만의 시작페이지 ::</span></div></div>
    <div class="ch-bar">
      <svg width="15" height="14" viewBox="0 0 15 14"><path d="M15 7 H3 M8 1.500 L2.500 7 L8 12.500" fill="none" stroke="#555" stroke-width="2.600"/></svg>
      <svg width="15" height="14" viewBox="0 0 15 14"><path d="M0 7 H12 M7 1.500 L12.500 7 L7 12.500" fill="none" stroke="#bbb" stroke-width="2.600"/></svg>
      <svg width="15" height="15" viewBox="0 0 15 15"><path d="M12.500 5 A6 6 0 1 0 13.500 9.500" fill="none" stroke="#555" stroke-width="2.600"/><path d="M9 5.500 H15 V0Z" fill="#555"/></svg>
      <svg width="14" height="15" viewBox="0 0 14 15"><path d="M7 0 L14 7 H12 V15 H8.500 V10 H5.500 V15 H2 V7 H0Z" fill="#555"/></svg>
      <span class="ch-omni"></span>
    </div>
    <div class="ch-marks">
      <svg width="13" height="13" viewBox="0 0 13 13"><rect width="3" height="3" fill="#e33"/><rect x="5" width="3" height="3" fill="#e33"/><rect x="10" width="3" height="3" fill="#fa0"/><rect y="5" width="3" height="3" fill="#39f"/><rect x="5" y="5" width="3" height="3" fill="#39f"/><rect x="10" y="5" width="3" height="3" fill="#fa0"/><rect y="10" width="3" height="3" fill="#3a3"/><rect x="5" y="10" width="3" height="3" fill="#3a3"/><rect x="10" y="10" width="3" height="3" fill="#fa0"/></svg>
      <span>응용프로그램</span>
      <svg width="16" height="13" viewBox="0 0 16 13"><path d="M1 1 H6 L8 3 H15 V12 H1Z" fill="#fbdc8e" stroke="#c99a3c"/></svg>
    </div>
    <div class="ch-page">
      <div class="col1"></div>
      <div class="col2"></div>
      <div class="forum">
        <div class="quote"></div>
        <div class="url">http://windowsforum.kr/5917163</div>
        <div class="attach"><span class="att"><svg width="11" height="12" viewBox="0 0 11 12"><path d="M0 0 H9 L11 2 V12 H0Z" fill="#5a62b8"/><rect x="3" y="1" width="5" height="3" fill="#fff"/><rect x="2" y="7" width="7" height="5" fill="#fff"/></svg>첨부 [3]</span><span class="pbtn">게시물 신고</span></div>
        <div class="listbtn"><span class="pbtn">목록</span></div>
        <div class="cbox">
          <div class="chead"><svg width="16" height="16"><use href="#bubble"/></svg><b>댓글 [1]</b></div>
          <div class="cuser"><b>① concentric</b><time>2014.07.26 17:39</time></div>
          <div class="ctext"><p>정보 감사합니다</p><p>vhdx 만 설치 되는건가요?</p><p>vhd 에는 설치 안돼던데 .... 맞나요?</p></div>
          <div class="creply"><svg width="12" height="14"><use href="#bubble"/></svg><span>댓글</span><svg width="12" height="12" viewBox="0 0 12 12"><path d="M4 0 H8 V4 H12 V8 H8 V12 H4 V8 H0 V4 H4Z" fill="#6a4fc4"/></svg><span>추천</span><svg width="12" height="12" viewBox="0 0 12 12"><rect y="4" width="12" height="4" fill="#6a4fc4"/></svg><span>신고</span></div>
          <div class="cdots"></div>
          <div class="editor">
            <div class="ed-tool">
              <div class="ed-row">
                <span class="eg"><i class="eb"><svg width="13" height="12" viewBox="0 0 13 12"><path d="M13 6 H3 M7 1.500 L2 6 L7 10.500" fill="none" stroke="#777" stroke-width="2.200"/></svg></i><i class="eb"><svg width="13" height="12" viewBox="0 0 13 12"><path d="M0 6 H10 M6 1.500 L11 6 L6 10.500" fill="none" stroke="#777" stroke-width="2.200"/></svg></i></span>
                <span class="esel">형식<b>▼</b></span><span class="esel">글꼴<b>▼</b></span><span class="esel">12px<b>▼</b></span><span class="esel">줄간격<b>▼</b></span>
                <span class="eg"><i class="eb s">B</i><i class="eb s u">U</i><i class="eb s it">I</i><i class="eb s st">S</i><i class="eb s g">C</i><i class="eb s gb">C</i><i class="eb s">X<sup>N</sup></i><i class="eb s">X<sub>N</sub></i></span>
                <span class="eg"><i class="eb active"><svg width="13" height="13"><use href="#a-l"/></svg></i><i class="eb"><svg width="13" height="13"><use href="#a-c"/></svg></i><i class="eb"><svg width="13" height="13"><use href="#a-r"/></svg></i><i class="eb"><svg width="13" height="13"><use href="#a-j"/></svg></i><i class="eb"><svg width="13" height="13"><use href="#a-o"/></svg></i><i class="eb"><svg width="13" height="13"><use href="#a-u"/></svg></i><i class="eb"><svg width="13" height="13"><use href="#a-d"/></svg></i><i class="eb"><svg width="13" height="13"><use href="#a-i"/></svg></i></span>
              </div>
              <div class="ed-row">
                <span class="eg"><i class="eb s q">“</i><i class="eb t">URL</i><i class="eb t">※</i></span>
                <span class="eg"><i class="eb"><svg width="13" height="13" viewBox="0 0 13 13"><path d="M.5 .5 H12.500 V12.500 H.5Z M.5 4.500 H12.500 M.5 8.500 H12.500 M4.500 .5 V12.500 M8.500 .5 V12.500" fill="none" stroke="#666"/></svg></i><i class="eb dim"><svg width="13" height="13" viewBox="0 0 13 13"><rect x=".5" y=".5" width="12" height="12" fill="none" stroke="#bbb"/></svg></i><i class="eb dim"><svg width="13" height="13" viewBox="0 0 13 13"><path d="M1 1 H12 M1 12 H12 M6.500 1 V12" stroke="#ccc" fill="none"/></svg></i><i class="eb dim"><svg width="13" height="13" viewBox="0 0 13 13"><path d="M1 1 V12 M12 1 V12 M1 6.500 H12" stroke="#ccc" fill="none"/></svg></i></span>
                <span class="eg"><i class="ew w79">확장 컴포넌트</i></span>
                <span class="eg"><i class="ew w76">HTML 편집기</i></span>
              </div>
            </div>
            <div class="ed-area">
              <div class="ed-text"><p>디렌딩블로그 에 오는데 이게 애들이군요. 처음 계획 사용이는데요 <u class="sp">600MB</u> 안에서 포팅합니다.</p><p>&nbsp;</p><p>아직 완전하지 않아서 지금은 테스트 중이며 다시 시도해 볼려고 합니다.</p><p>&nbsp;</p><p>잘하면 <u class="sp">500MB</u> 선에서 가능할 듯 합니다만... 실력이 미천해서 고생이 이만저만 아니네요...</p></div>
              <div class="ed-scroll"><b>▲</b><i></i><b>▼</b></div>
            </div>
            <div class="ed-foot"><label><i class="ck"></i>입력창 크기 자동조절</label><span class="grip"></span></div>
          </div>
          <div class="upload">
            <div class="up-prev"></div>
            <div class="up-list"><span class="up-scroll"><b>▲</b><b>▼</b></span></div>
            <div class="up-info"><p class="up-links"><u>파일 첨부</u> <u>선택 삭제</u> <u>본문 삽입</u></p><p>문서 첨부 제한 : 0Byte/ 50.00MB</p><p>파일 크기 제한 : 50.00MB (허용 확장자 : *.*)</p></div>
          </div>
          <div class="cdash"></div>
        </div>
      </div>
      <div class="ch-scroll"><b>▲</b><i></i><b class="down">▼</b></div>
    </div>
  </section>

  <!-- Explorer -->
  <section class="win win-exp">
    <header class="cap exp-cap">
      <span class="qat">
        <svg width="16" height="18"><use href="#pc"/></svg><i class="vs"></i>
        <svg width="14" height="18" viewBox="0 0 14 18"><path d="M1 1 H9 L13 5 V17 H1Z" fill="#fff" stroke="#888"/><path d="M4 12 L7 15 L12 7" fill="none" stroke="#e8602c" stroke-width="2"/></svg>
        <svg width="13" height="18" viewBox="0 0 13 18"><path d="M1 1 H8 L12 4 V17 H1Z" fill="#dbe6f4" stroke="#aac"/></svg>
        <small>▾</small><i class="vs"></i>
      </span>
      <span class="cap-title">내 PC</span>
      <span class="capbtns"><i class="cb-min"></i><i class="cb-max"></i><i class="cb-close">✕</i></span>
    </header>
    <nav class="rib-tabs"><span class="rt file">파일</span><span class="rt cur">컴퓨터</span><span class="rt">보기</span><span class="grow"></span><small class="rib-up">⌃</small><svg width="15" height="22" viewBox="0 0 15 22"><ellipse cx="7.500" cy="11" rx="7" ry="10" fill="#1c7fd6"/><text x="7.500" y="16" text-anchor="middle" font-size="13" font-weight="700" fill="#fff" font-family="Liberation Sans">?</text></svg></nav>
    <div class="ribbon">
      <section class="rg g1"><div class="rg-btns">
        <span class="rb"><svg width="30" height="29" viewBox="0 0 30 29"><path d="M4 1 H18 L24 7 V27 H4Z" fill="#fff" stroke="#999"/><path d="M10 17 L15 23 L26 11" fill="none" stroke="#e8743b" stroke-width="3.400"/></svg><span>속성</span></span>
        <span class="rb off"><svg width="30" height="29" viewBox="0 0 30 29"><path d="M5 1 H17 L23 7 V27 H5Z" fill="#edf2fb" stroke="#b4c6e0"/><path d="M18 10 L27 18 H22 V27 H14 V18 H9Z" fill="#8fa6c4"/></svg><span>열기</span></span>
        <span class="rb off"><svg width="30" height="29" viewBox="0 0 30 29"><rect x="1" y="9" width="28" height="12" fill="#fff" stroke="#b5c1cf" stroke-width="1.600"/><rect x="4" y="12" width="14" height="6" fill="#a3b3c5"/><path d="M18 2 H27 M18 27 H27 M22.500 2 V27" stroke="#9aa7b7" stroke-width="2.200"/></svg><span>이름<br>바꾸기</span></span>
      </div><footer>위치</footer></section>
      <section class="rg g2"><div class="rg-btns">
        <span class="rb"><svg width="34" height="29" viewBox="0 0 34 29"><path d="M8 5 L20 1 V28 L8 27Z" fill="#a8a8a8"/><path d="M8 5 L3 8 V28 L8 27Z" fill="#888"/><rect x="15" y="0" width="11" height="12" fill="#333"/><rect x="17" y="2" width="7" height="8" fill="#e0622c"/><path d="M26 8 A5 5 0 0 1 24 16" stroke="#1c8fe0" stroke-width="3" fill="none"/></svg><span>미디어 서버<br>연결 <small>▾</small></span></span>
        <span class="rb"><svg width="34" height="29" viewBox="0 0 34 29"><use href="#drive" x="5" y="1" width="26" height="17"/><path d="M1 26 H33 M10 20 L17 26" stroke="#2aa04a" stroke-width="3"/></svg><span>네트워크<br>드라이브 연결 <small>▾</small></span></span>
        <span class="rb"><svg width="34" height="29" viewBox="0 0 34 29"><use href="#pc" x="12" y="-1" width="22" height="22"/><path d="M1 26 H30 M10 20 L17 26" stroke="#2aa04a" stroke-width="3"/></svg><span>네트워크<br>위치 추가</span></span>
      </div><footer>네트워크</footer></section>
      <section class="rg g3"><div class="rg-row">
        <span class="rb w44"><svg width="32" height="29" viewBox="0 0 32 29"><rect x="1" y="1" width="30" height="20" fill="#2273bc"/><circle cx="10" cy="9" r="5" fill="#f3a42d"/><path d="M18 5 H28 M18 11 H28 M18 16 H28" stroke="#cfe6f7" stroke-width="2"/><ellipse cx="16" cy="25" rx="7" ry="4" fill="#bfbfbf"/></svg><span>제어판<br>열기</span></span>
        <ul class="rg-list">
          <li><svg width="14" height="16" viewBox="0 0 14 16"><rect x="1" y="1" width="12" height="14" fill="#dbdbdb" stroke="#666"/><rect x="3" y="5" width="8" height="5" fill="#8a6f3d"/></svg>프로그램 제거 또는 변경</li>
          <li><svg width="14" height="16"><use href="#pc"/></svg>시스템 속성</li>
          <li><svg width="14" height="16"><use href="#pc"/></svg>컴퓨터 관리</li>
        </ul></div><footer>시스템</footer></section>
    </div>
    <div class="exp-addr">
      <span class="navc"><svg width="18" height="18" viewBox="0 0 18 18"><circle cx="9" cy="9" r="8" fill="none" stroke="#ccc"/><path d="M13 9 H5 M8 5.500 L4.500 9 L8 12.500" fill="none" stroke="#ccc" stroke-width="1.400"/></svg><svg width="18" height="18" viewBox="0 0 18 18"><circle cx="9" cy="9" r="8" fill="none" stroke="#888"/><path d="M5 9 H13 M10 5.500 L13.500 9 L10 12.500" fill="none" stroke="#777" stroke-width="1.400"/></svg><small>▾</small><svg width="10" height="14" viewBox="0 0 10 14"><path d="M5 14 V2 M1 6 L5 1 L9 6" fill="none" stroke="#666" stroke-width="1.400"/></svg></span>
      <div class="addr"><svg width="16" height="18"><use href="#pc"/></svg><em>▸</em><span>내 PC</span><span class="grow"></span><em class="dd">⌄</em><span class="rf"><svg width="13" height="13"><use href="#refresh"/></svg></span></div>
      <div class="srch"><span>내 PC 검색</span><svg width="13" height="13"><use href="#search"/></svg></div>
    </div>
    <div class="exp-main">
      <nav class="exp-nav">
        <div class="ni top"><svg width="17" height="18" viewBox="0 0 17 18"><path d="M8.500 0 L11 6 L17 7 L12.500 11 L14 18 L8.500 14.500 L3 18 L4.500 11 L0 7 L6 6Z" fill="#f5b430" stroke="#c98510" stroke-width=".5"/></svg>즐겨찾기</div>
        <div class="ni sub"><svg width="16" height="18" viewBox="0 0 36 46"><use href="#folder" width="36" height="46"/><path d="M16 18 H26 V30 H32 L21 44 L10 30 H16Z" fill="#2b8fe0"/></svg>다운로드</div>
        <div class="ni sub"><svg width="16" height="18" viewBox="0 0 16 18"><rect x="0" y="2" width="16" height="13" fill="#1c5fb0" stroke="#555"/><rect y="15" width="16" height="2" fill="#999"/></svg>바탕 화면</div>
        <div class="ni sub"><svg width="16" height="18" viewBox="0 0 16 18"><rect x="1" y="1" width="9" height="12" fill="#eee" stroke="#888"/><rect x="4" y="6" width="11" height="11" fill="#e8e8e8" stroke="#888"/><path d="M3 4 H8 M3 7 H8" stroke="#28a"/></svg>최근 위치</div>
        <div class="ni pcitem"><svg width="16" height="18"><use href="#pc"/></svg>내 PC</div>
        <div class="ni net"><svg width="16" height="18" viewBox="0 0 16 18"><circle cx="6" cy="7" r="6" fill="#3aa0dc"/><path d="M3 4 Q7 2 9 6 L5 10Z" fill="#5bb64a"/><use href="#pc" x="6" y="6" width="10" height="11"/></svg>네트워크</div>
      </nav>
      <div class="exp-view">
        <h2 class="gh"><i>◢</i><span>폴더 (6)</span></h2>
        <div class="fgrid">
          <div class="fitem"><svg width="36" height="46" viewBox="0 0 36 46"><use href="#folder" width="36" height="46"/><path d="M18 16 H27 V29 H35 L22 45 L9 29 H18Z" fill="#2188dd"/></svg>다운로드</div>
          <div class="fitem"><svg width="36" height="46" viewBox="0 0 36 46"><use href="#folder" width="36" height="46"/><path d="M12 16 L30 20 V46 L12 43Z" fill="#27324a"/><path d="M15 21 L27 24 V41 L15 39Z" fill="#e35d2f"/><circle cx="21" cy="30" r="4" fill="#3aa0dc"/></svg>동영상</div>
          <div class="fitem"><svg width="36" height="46" viewBox="0 0 36 46"><use href="#folder" width="36" height="46"/><path d="M14 12 L32 18 V46 L14 40Z" fill="#f3f5f7" stroke="#bbb" stroke-width=".5"/><path d="M17 20 L29 24 M17 24 L24 27 M17 32 L29 36 M17 36 L29 40" stroke="#7fa3b8"/></svg>문서</div>
          <div class="fitem"><svg width="36" height="46" viewBox="0 0 36 46"><use href="#folder" width="36" height="46"/><path d="M11 18 L34 26 V42 L11 38Z" fill="#2a6fc4" stroke="#333"/><path d="M9 42 L36 46" stroke="#555" stroke-width="3"/></svg>바탕 화면</div>
          <div class="fitem"><svg width="36" height="46" viewBox="0 0 36 46"><use href="#folder" width="36" height="46"/><path d="M14 14 L32 20 V46 L14 40Z" fill="#e8f0f4" stroke="#bbb" stroke-width=".5"/><path d="M16 20 L30 25 V36 L16 32Z" fill="#6cb6d8"/><path d="M16 32 L24 28 L30 36Z" fill="#4a8f64"/></svg>사진</div>
          <div class="fitem"><svg width="36" height="46" viewBox="0 0 36 46"><use href="#folder" width="36" height="46"/><ellipse cx="20" cy="36" rx="8" ry="7" fill="#2f8cd8"/><path d="M26 36 V8 Q32 12 33 20" stroke="#2f8cd8" stroke-width="2.500" fill="none"/></svg>음악</div>
        </div>
        <h2 class="gh g2h"><i>◢</i><span>장치 및 드라이브 (9)</span></h2>
        <div class="dgrid">
          <div class="ditem"><svg width="47" height="27"><use href="#drive"/></svg><div><p>A_RAMDISK (A:)</p><div class="dbar"><i style="width:1%"></i></div><small>13.9GB 중 13.9GB 사용 가능</small></div></div>
          <div class="ditem"><svg width="47" height="27"><use href="#drive"/></svg><div><p>B_RAMDISK (B:)</p><div class="dbar"><i style="width:0"></i></div><small>111GB 중 111GB 사용 가능</small></div></div>
          <div class="ditem cdrive"><span class="cd-ico"><svg class="cd-logo" width="20" height="20"><use href="#wlogo"/></svg><svg width="47" height="27"><use href="#drive"/></svg></span><div><p>로컬 디스크 (C:)</p><div class="dbar"><i style="width:4%"></i></div><small>17.9GB 중 17.3GB 사용 가능</small></div></div>
          <div class="ditem"><svg width="47" height="27"><use href="#drive"/></svg><div><p>VHD_D (D:)</p><div class="dbar"><i style="width:70%"></i></div><small>99.9GB 중 29.7GB 사용 가능</small></div></div>
          <div class="ditem"><svg width="47" height="27"><use href="#drive"/></svg><div><p>APP_E (E:)</p><div class="dbar"><i style="width:75%"></i></div><small>67.9GB 중 16.9GB 사용 가능</small></div></div>
          <div class="ditem"><svg width="47" height="27"><use href="#drive"/></svg><div><p>APP_E 120GB (F:)</p><div class="dbar"><i style="width:62%"></i></div><small>59.9GB 중 22.9GB 사용 가능</small></div></div>
          <div class="ditem"><svg width="47" height="27"><use href="#drive"/></svg><div><p>Work_F 120GB (G:)</p><div class="dbar"><i style="width:10%"></i></div><small>51.7GB 중 46.6GB 사용 가능</small></div></div>
          <div class="ditem"><svg width="47" height="27"><use href="#drive"/></svg><div><p>SSD_80GB (H:)</p><div class="dbar"><i style="width:81%"></i></div><small>74.5GB 중 13.2GB 사용 가능</small></div></div>
          <div class="ditem"><svg width="47" height="27"><use href="#drive"/></svg><div><p>3TB-DATA (I:)</p><div class="dbar"><i style="width:70%"></i></div><small>2.72TB 중 846GB 사용 가능</small></div></div>
        </div>
      </div>
    </div>
    <footer class="exp-status"><span>15개 항목</span><span class="grow"></span><svg width="15" height="12" viewBox="0 0 15 12"><path d="M1 2 H14 M1 6 H14 M1 10 H14" stroke="#666" stroke-dasharray="2 1"/></svg><svg width="14" height="12" viewBox="0 0 14 12"><rect x=".5" y=".5" width="13" height="11" fill="#cfe5f7" stroke="#3b83c0"/></svg></footer>
  </section>

  <!-- Properties dialog -->
  <section class="win-dlg">
    <header class="dlg-cap"><svg class="dlg-capico" width="16" height="16" viewBox="0 0 16 16"><use href="#drive" x="0" y="5" width="16" height="11"/><use href="#wlogo" x="1" y="0" width="7" height="7" fill="#00b4f0"/></svg><span class="dlg-title">로컬 디스크 (C:) 속성</span><i class="dlg-close">✕</i></header>
    <div class="dlg-body">
      <div class="dlg-tabs"><span class="on">일반</span><span>도구</span><span>하드웨어</span><span>공유</span><span>보안</span><span>할당량</span></div>
      <div class="dlg-panel">
        <div class="dlg-name"><span class="dlg-ico"><svg class="cd-logo2" width="14" height="14"><use href="#wlogo"/></svg><svg width="31" height="18"><use href="#drive"/></svg></span><span class="dlg-input"></span></div>
        <hr>
        <div class="dlg-kv"><span>종류:</span><span>로컬 디스크</span></div>
        <div class="dlg-kv kv2"><span>파일 시스템:</span><span class="ntfs">NTFS</span></div>
        <hr class="h2">
        <div class="dlg-use"><i class="sw blue"></i><span>사용 중인 공간:</span><span class="r1">686,071,808바이트</span><span class="r2">654MB</span></div>
        <div class="dlg-use u2"><i class="sw pink"></i><span>사용 가능한 공간:</span><span class="r1">18,639,179,776바이트</span><span class="r2">17.3GB</span></div>
        <hr class="h3">
        <div class="dlg-use u3"><i class="sw none"></i><span>용량:</span><span class="r1">19,325,251,584바이트</span><span class="r2">17.9GB</span></div>
        <div class="dlg-pie">
          <svg class="pie" width="146" height="76" viewBox="0 0 146 76"><path d="M1 32 V42 A72 31 0 0 0 145 42 V32Z" fill="#800080" stroke="#555" stroke-width=".5"/><ellipse cx="73" cy="32" rx="72" ry="31" fill="#ff00ff" stroke="#555" stroke-width=".5"/><path d="M73 32 L10 17 A72 31 0 0 0 1 32Z" fill="#0000ff" stroke="#333" stroke-width=".5"/></svg>
          <div class="pie-foot"><span class="pie-lbl">드라이브 C:</span><span class="wbtn clean">디스크 정리(D)</span></div>
        </div>
        <hr class="h4">
        <label class="dlg-ck c1"><i class="cbx"></i>이 드라이브를 압축하여 디스크 공간 절약(C)</label>
        <label class="dlg-ck"><i class="cbx checked">✔</i>이 드라이브의 파일 속성 및 내용 색인 허용(I)</label>
      </div>
      <div class="dlg-btns"><span class="wbtn def">확인</span><span class="wbtn">취소</span><span class="wbtn">적용(A)</span></div>
    </div>
  </section>

  <!-- Clock gadget -->
  <svg class="clock" width="250" height="260" viewBox="2310 1310 250 260" aria-hidden="true">
    <g class="clock-num" text-anchor="middle">
      <text x="2437" y="1350">12</text><text x="2386" y="1363">11</text><text x="2487" y="1364">1</text><text x="2348" y="1400">10</text><text x="2525" y="1403">2</text><text x="2333" y="1453">9</text><text x="2538" y="1453">3</text><text x="2348" y="1504">8</text><text x="2524" y="1504">4</text><text x="2384" y="1542">7</text><text x="2487" y="1542">5</text><text x="2436" y="1556">6</text>
    </g>
    <g class="clock-hands"><path d="M2362 1426 L2425 1434 L2440 1446 L2432 1432Z"/><path d="M2432 1434 L2442 1437 L2519 1490 L2515 1490 L2428 1440Z"/><path class="sec" d="M2431 1424 L2455 1539"/></g>
  </svg>
</main>
</body>
</html>
```
FILE: styles.css
```css
*{box-sizing:border-box}
html,body{margin:0;padding:0}
body{font:12px/15px "Noto Sans","Noto Sans CJK KR",sans-serif;color:#1a1a1a;background:#f2a200}
p,h1,h2,dl,dd,ul{margin:0;padding:0}
i,em,small,address{font-style:normal}
hr{border:0;margin:0}
.defs{position:absolute}
.grow{flex:1}
.desktop{position:relative;width:2560px;height:1600px;overflow:hidden}
.wallpaper{position:absolute;left:0;top:0;width:2560px;height:1600px}
.win{position:absolute;background:#ebebeb;border:1px solid #d4d4d4;display:flex;flex-direction:column;overflow:hidden}
.win-disk{left:0;top:0;width:800px;height:1175px}
.win-tc{left:1500px;top:31px;width:1050px;height:1000px;padding:0 5px}
.win-sys{left:1642px;top:1002px;width:910px;height:591px}
.win-chrome{left:660px;top:402px;width:1164px;height:1188px}
.win-exp{left:798px;top:8px;width:1024px;height:892px}

/* caption */
.cap{display:grid;grid-template-columns:1fr auto 1fr;align-items:start;height:29px;flex:none}
.cap-title{font-size:15px;line-height:29px;color:#333}
.cap-ico{padding:5px 0 0 10px}
.capbtns{display:flex;justify-self:end;align-items:flex-start;height:20px}
.capbtns i{display:block}
.cb-min{width:7px;height:3px;background:#222;margin:14px 14px 0 0}
.cb-max{width:10px;height:10px;border:1px solid #222;border-top-width:2px;margin:5px 13px 0 0}
.cb-close{width:46px;height:20px;background:#bfbfbf;color:#fff;text-align:center;font:12px/20px "DejaVu Sans",sans-serif}

/* disk management */
.menubar{display:flex;gap:16px;height:24px;margin:1px 6px 0 7px;padding-left:10px;background:#f5f6f7;border-bottom:1px solid #c8c8c8;line-height:22px}
.dm-tools{display:flex;align-items:center;gap:7px;height:23px;margin:0 6px 0 7px;padding-left:4px;background:#f5f6f7;flex:none}
.dm-tools svg:nth-child(n+2){margin-left:1px}
.dm-tools .vs{margin:0 2px 0 4px}
.vs{display:inline-block;width:1px;height:18px;background:#a8a8a8}
.lv{flex:none;height:317px;margin:5px 9px 0 9px;background:#fff;border:1px solid #a0a0a0;border-top:2px solid #777;overflow:hidden}
.lv-grid{display:grid;grid-template-columns:128px 76px 68px 86px 162px 96px 66px 92px;white-space:nowrap}
.lv-head{height:20px;line-height:19px;background:linear-gradient(#fff,#f3f3f3);border-bottom:2px solid #888;color:#333}
.lv-head span{padding-left:6px;border-right:2px solid #aaa;overflow:hidden}
.lv-row{height:17px;line-height:17px;color:#222}
.lv-row span{padding-left:7px;overflow:hidden}
.lv-row span:nth-child(n+6){padding-left:5px}
.lv-row .vol{padding-left:2px;display:flex;align-items:center}
.lv-row .vol svg{margin-right:1px;flex:none}
.dm-pane{flex:none;height:739px;margin:5px 0 0 9px;padding-top:5px;overflow:hidden;background:#f0f0f0;width:651px;border-top:1px solid #888}
.disk{display:flex;height:99.300px;border-bottom:1px solid #c8c8c8;width:700px}
.disk-info{width:115px;flex:none;padding:5px 0 0 10px;display:flex;flex-direction:column;background:#f0f0f0;border-right:1px solid #d0d0d0;line-height:15.500px;color:#333}
.disk-info b{font-weight:400;display:flex;align-items:center;gap:7px;color:#111;height:17px}
.frame{display:flex;gap:2px;align-self:flex-start;margin-top:1px;height:96px;padding:4px 4px 2px 1px;border:1px solid #a9a9a9;background:#f0f0f0}
.part{flex:none;display:flex;flex-direction:column;overflow:hidden}
.bar{display:block;height:14px;background:#000080;flex:none}
.pbox{flex:1;margin:2px 3px 0 4px;padding:3px 0 0 2px;background:#fff;border-left:1px solid #a0a0a0;border-top:1px solid #a0a0a0;display:flex;flex-direction:column;white-space:nowrap;overflow:hidden;color:#333}
.pbox b{font-weight:700;color:#111}
.legend{display:flex;align-items:center;height:19px;gap:3px;margin-top:18px;padding-left:6px;background:#f0f0f0;border-top:1px solid #ddd;border-bottom:1px solid #999}
.legend i{width:11px;height:13px}
.legend .k{background:#000}
.legend .b{background:#000080;margin-left:3px}
.dm-status{height:24px;margin:0 5px 0 7px;background:#f0f0f0}

/* chrome */
.win-chrome{background:#e9e9e9;border-color:#ccc;padding:0 5px 7px}
.ch-tabs{height:21px;margin-top:20px;padding-left:10px;flex:none}
.ch-tab{display:flex;align-items:center;gap:6px;width:200px;height:24px;background:#dfe3ea;clip-path:polygon(0 100%,9px 0,100% 0,100% 100%);padding:0 0 4px 10px;color:#666;white-space:nowrap}
.ch-bar{display:flex;align-items:center;gap:14px;height:36px;padding-left:11px;margin-top:3px;background:#f1f1f1;flex:none;border-radius:4px 0 0 0}
.ch-omni{display:block;width:30px;height:26px;border:1px solid #ccc;border-radius:2px;background:#fff;margin-left:2px}
.ch-marks{display:flex;align-items:center;gap:7px;height:24px;padding-left:9px;background:#f1f1f1;border-bottom:1px solid #aaa;flex:none}
.ch-marks svg:last-child{margin-left:6px}
.ch-page{flex:1;display:grid;grid-template-columns:68px 219px 1fr 18px;background:#fff;overflow:hidden;min-height:0}
.col1{border-right:1px solid #d8d8d8}
.col2{border-right:1px solid #d8d8d8}
.forum{padding:0 76px 0 10px;overflow:hidden;color:#222}
.quote{height:116px;margin-top:300px;width:726px;border:1px solid #000;background:#fff}
.url{height:16px;margin-top:7px;color:#888;letter-spacing:.3px}
.attach{display:flex;justify-content:space-between;margin-top:16px;height:25px}
.att{display:flex;align-items:center;gap:2px;height:16px;margin-top:-4px;color:#555}
.pbtn{display:flex;align-items:center;justify-content:center;height:25px;padding:0 12px;background:linear-gradient(#fff,#ececec);border:1px solid #ddd;border-bottom:2px solid #bbb;color:#333}
.listbtn{display:flex;justify-content:flex-end;margin-top:15px}
.cbox{margin-top:10px;border:1px solid #ddd;padding:3px 2px 0;height:700px}
.chead{display:flex;align-items:center;height:30px;background:#f4f4f4;padding-left:10px;gap:9px;font-size:14px}
.cuser{display:flex;justify-content:space-between;height:18px;margin-top:19px;padding:0 14px 0 4px;line-height:18px;font-size:13px}
.cuser time{font-size:12px;color:#999}
.ctext{margin-top:20px;padding-left:4px;line-height:22px}
.creply{display:flex;justify-content:flex-end;align-items:center;gap:3px;height:18px;margin-top:30px;padding-right:15px;color:#777}
.creply span{margin-right:4px}
.cdots{height:1px;margin:13px 5px 0 4px;border-top:1px dashed #ccc}
.editor{margin:9px 10px 0 9px;border:1px solid #c4c4c4;width:734px}
.ed-tool{height:55px;padding:5px 0 0 10px;background:linear-gradient(#fff,#eee);border-bottom:2px solid #bbb}
.ed-row{display:flex;gap:4px;height:22px;margin-bottom:1px}
.esel + .eg{margin-left:2px}
.eg + .eg{margin-left:1px}
.eg{display:flex;border:1px solid #bbb;background:#f4f4f4}
.eb{display:flex;align-items:center;justify-content:center;width:21px;height:20px;color:#444;border-right:1px solid #e2e2e2}
.ed-row:first-child .eg:first-child .eb{width:20px}
.eg .s{font-weight:700;font-size:13px}
.eg .u{text-decoration:underline}
.eg .it{font-style:italic;font-family:"Liberation Serif",serif}
.eg .st{text-decoration:line-through}
.eg .g{color:#1eb41e}
.eg .gb{background:#1fc41f;color:#fff}
.eg .t{font-size:11px;width:23px}
.eg .q{font:700 20px/26px "Liberation Serif",serif;color:#666}
.eb.active{background:#c6ec8c;box-shadow:inset 0 0 0 1px #7cb342}
.eb sup,.eb sub{font-size:7px;line-height:7px}
.dim{opacity:.8}
.ew{display:block;height:20px;line-height:20px;text-align:center;color:#333}
.w79{width:77px}
.w76{width:74px}
.esel{display:flex;justify-content:space-between;align-items:center;width:64px;height:22px;padding:0 4px;background:#fff;border:1px solid #bbb;color:#333}
.esel b{font-size:9px;font-weight:400;color:#111}
.ed-area{display:flex;height:132px;padding-top:11px;background:#fff;border-bottom:1px solid #c4c4c4}
.ed-text{flex:1;height:120px;overflow:hidden;padding-left:10px;line-height:18.500px;color:#222}
.ed-text p{white-space:nowrap}
.ed-text p:first-child{margin-top:-9px}
.sp{text-decoration:underline wavy #e03030 1px}
.ed-scroll{width:16px;height:99px;margin:1px 10px 0 0;background:#eee;display:flex;flex-direction:column;align-items:center;justify-content:space-between;position:relative;font-size:8px;color:#555}
.ed-scroll b{font-weight:400;line-height:14px}
.ed-scroll i{position:absolute;top:46px;left:1px;width:14px;height:22px;background:#b5b5b5}
.ed-foot{display:flex;align-items:center;height:26px;background:#f6f6f6;padding:1px 0 0 5px;color:#888}
.ed-foot label{display:flex;align-items:center;gap:5px}
.ck{width:12px;height:13px;border:1px solid #aaa;border-radius:2px;background:#eee}
.grip{width:9px;height:4px;margin-left:230px;border-top:1px solid #aaa;border-bottom:1px solid #aaa}
.upload{display:flex;margin:15px 0 0 9px}
.up-prev{width:70px;height:69px;border:1px solid #ccc}
.up-list{position:relative;width:260px;height:69px;margin-left:10px;border:1px solid #aaa;border-bottom-width:2px}
.up-scroll{position:absolute;right:0;top:0;bottom:0;width:16px;background:#eee;display:flex;flex-direction:column;align-items:center;justify-content:space-between;font-size:8px;color:#aaa}
.up-scroll b{font-weight:400}
.up-info{margin-left:10px;color:#666;line-height:14px}
.up-links{color:#111;margin-bottom:10px}
.cdash{width:10px;height:2px;background:#bbb;margin:17px 0 0 9px}
.ch-scroll{position:relative;background:#f0f0f0;display:flex;flex-direction:column;align-items:center;font-size:8px;color:#555;border-left:1px solid #e0e0e0}
.ch-scroll i{position:absolute;left:3px;top:443px;width:13px;height:289px;background:#c4c4c4}
.ch-scroll b{font-weight:400}
.ch-scroll .down{position:absolute;bottom:0}

/* explorer */
.exp-cap{height:29px}
.qat{display:flex;align-items:center;gap:9px;padding:5px 0 0 5px;color:#333}
.qat small{font-size:10px}
.rib-tabs{display:flex;align-items:stretch;height:25px;background:#fff;border-top:1px solid #dedede;border-bottom:1px solid #dadada;margin:0 0 0 6px;padding-right:4px;flex:none}
.rt{display:flex;align-items:center;padding:0 15px 0 14px;line-height:23px}
.rt.file{width:58px;background:#1979ca;color:#fff;justify-content:center;padding:0}
.rt.cur{width:64px;background:#f5f6f7;justify-content:center;padding:0;border-right:1px solid #dadada}
.rib-tabs>.rt:nth-child(3){padding-left:15px}
.rib-up{align-self:center;margin-right:8px;color:#888;font-size:14px}
.rib-tabs svg{align-self:center}
.ribbon{display:flex;height:95px;background:#f5f6f7;border-bottom:1px solid #dadada;margin-left:6px;flex:none;padding:2px 0}
.rg{display:flex;flex-direction:column;border-right:1px solid #e2e3e4;position:relative}
.rg footer{text-align:center;color:#999;height:18px;line-height:18px}
.rg-btns,.rg-row{flex:1;display:flex;min-height:0}
.g1{width:139px;padding-left:4px}
.g2{width:227px}
.g3{width:211px;padding-left:2px}
.g1 .rb{width:42px}
.g2 .rb{width:75.500px}
.w44{width:44px}
.rb{display:flex;flex-direction:column;align-items:center;text-align:center;white-space:nowrap;line-height:15px;padding-top:8px;color:#222}
.rb svg{margin-bottom:3px;flex:none}
.rb small{font-size:8px;color:#333}
.rb.off{color:#9a9a9a}
.rg-list{list-style:none;display:flex;flex-direction:column;padding:6px 0 0 3px;gap:8px;color:#222}
.rg-list li{display:flex;align-items:center;gap:4px;white-space:nowrap;height:16px}
.exp-addr{display:flex;align-items:center;height:21px;margin:10px 0 0 6px;flex:none;background:#fff}
.navc{display:flex;align-items:center;gap:8px;width:108px;padding-left:10px;color:#777}
.navc small{font-size:9px;margin-right:-1px}
.addr,.sys-crumb{display:flex;align-items:center;height:21px;border:1px solid #d9d9d9;background:#fff;padding-left:2px;gap:5px;color:#333;white-space:nowrap}
.addr{width:676px}
.addr em,.sys-crumb em{font-size:9px;color:#666}
.dd{margin-right:3px;font-size:13px!important}
.rf{display:flex;align-items:center;justify-content:center;width:25px;height:19px;border-left:1px solid #e2e2e2}
.srch,.sys-search{display:flex;align-items:center;justify-content:space-between;height:21px;border:1px solid #d9d9d9;background:#fff;padding:0 5px 0 9px;color:#777}
.srch{width:201px;margin-left:12px}
.exp-main{flex:1;display:grid;grid-template-columns:159px 1fr;margin-left:6px;background:#fff;min-height:0;padding-top:8px}
.exp-nav{border-right:1px solid #eee;padding-top:9px}
.ni{display:flex;align-items:center;gap:5px;height:20px;padding-left:20px;white-space:nowrap;margin-bottom:1px;color:#222}
.ni.sub{padding-left:30px}
.ni.top{margin-bottom:1px}
.pcitem{margin-top:22px;background:#f2f2f2;border:1px solid #e5e5e5;width:158px;padding-left:19px}
.ni.net{margin-top:22px}
.exp-view{padding:6px 10px 0 9px}
.gh{display:flex;align-items:center;gap:6px;font-weight:400;font-size:14px;height:20px;color:#1e3287}
.gh i{font-size:7px;color:#333;flex:none}
.gh span{flex:none}
.gh::after{content:"";flex:1;border-top:1px solid #e2e2e2;margin-left:0}
.fgrid{display:grid;grid-template-columns:repeat(3,254px);grid-auto-rows:57px;margin-top:8px;padding-left:13px}
.fitem{display:flex;align-items:flex-start;gap:14px;line-height:50px;height:57px;color:#222}
.fitem svg{flex:none}
.g2h{margin-top:-1px}
.dgrid{display:grid;grid-template-columns:repeat(3,254px);grid-auto-rows:56px;margin-top:9px;padding-left:10px}
.ditem{display:flex;align-items:flex-start;gap:5px}
.ditem>svg{margin-top:18px;flex:none}
.cd-ico{display:flex;flex-direction:column;width:47px;flex:none;margin-top:-3px}
.cd-logo{fill:#00bfff;margin-left:1px}
.cd-ico svg:last-child{margin-top:1px}
.ditem p{line-height:16px;color:#222;white-space:nowrap}
.dbar{width:190px;height:12px;margin-top:2px;background:#e6e6e6;border:1px solid #bcbcbc}
.dbar i{display:block;height:100%;background:#26a0da}
.ditem small{display:block;font-size:12px;line-height:16px;margin-top:1px;color:#6d6d6d;white-space:nowrap}
.exp-status{display:flex;align-items:center;gap:8px;height:22px;margin-left:6px;background:#fff;padding:0 12px 2px 15px;color:#444;flex:none}
.win-exp{padding-bottom:5px}

/* total commander */
.tc-cap{display:flex;justify-content:space-between;height:29px;flex:none}
.tc-title{font-size:15px;line-height:30px;padding-left:223px;color:#222;white-space:nowrap}
.tc-menu{display:flex;gap:14px;height:21px;line-height:21px;font-size:13px;background:#f6f6f6;padding:0 8px 0 198px;color:#666;margin-top:2px;flex:none;border-bottom:1px solid #ddd}
.tc-tools{display:flex;height:38px;padding-left:311px;align-items:center;background:#f2f2f2;border-bottom:1px solid #bbb;flex:none}
.tool{display:flex;align-items:center;justify-content:center;width:35px;height:36px;flex:none}
.tool.on{background:#cce4f7;border:1px solid #7eb4ea}
.tsep{width:1px;height:30px;background:#999;margin:0 5px;flex:none}
.tc-tools2{display:flex;height:38px;padding-left:316px;align-items:center;gap:6px;background:#f2f2f2;border-bottom:1px solid #bbb;flex:none}
.tc-tools2 .tool{width:2px}
.tool2{flex:none;width:30px;display:flex;justify-content:center}
.tc-drives{display:flex;height:27px;padding-left:469px;align-items:center;background:#f2f2f2;border-bottom:1px solid #bbb;flex:none}
.drv{display:flex;align-items:center;gap:3px;width:39px;height:25px;font-size:17px;line-height:25px;padding-left:1px}
.drv.on{background:#cce4f7;border:1px solid #7eb4ea;width:37px;margin:0 1px 0 0}
.tc-panels{flex:1;display:grid;grid-template-columns:463px 571px;gap:6px;min-height:0;background:#f2f2f2}
.tc-panel{display:flex;flex-direction:column;min-width:0;overflow:hidden}
.tc-pathrow{display:flex;align-items:center;height:33px;gap:2px;flex:none;padding-top:3px;font-size:15px}
.sq{display:flex;align-items:center;justify-content:center;width:17px;height:26px;background:#f0f0f0;border:1px solid #bbb;font-size:13px;color:#222;margin-left:2px;flex:none}
.tc-combo{display:flex;align-items:center;gap:3px;width:53px;height:28px;background:#fff;border:1px solid #ccc;padding-left:2px;font-size:15px}
.tc-combo em{margin-left:auto;padding-right:3px;font-size:12px;line-height:10px}
.tc-free{padding-left:4px;font-size:15px;color:#222;white-space:nowrap}
.tc-pathbar{display:flex;align-items:center;gap:1px;height:23px;flex:none}
.tc-path{flex:1;height:22px;line-height:22px;background:#9ab4d2;font-size:15px;color:#1a1a1a;white-space:nowrap;overflow:hidden}
.tc-path b{font-size:13px;font-weight:400}
.tc-path.off{background:#e6e9ee;text-align:right;padding-right:14px}
.tc-pathbar .sq{height:22px;width:17px}
.tc-cols{display:grid;height:27px;margin-top:1px;background:#fbfbfb;border-bottom:1px solid #bbb;line-height:26px;font-size:15px;color:#222;flex:none}
.left-cols{padding-left:325px}
.right-cols{grid-template-columns:143px 143px 143px 1fr}
.right-cols span{padding-left:4px}
.right-cols .sorted{background:#f0f4fa;border-right:1px solid #ddd;padding-left:1px;display:flex;align-items:center;gap:1px}
.sorted b{font:11px "DejaVu Sans",sans-serif}
.tc-list{flex:1;background:#d0d0d0;border:1px solid #c0c0c0;min-height:0}
.tc-row{display:flex;align-items:center;gap:6px;height:32px;padding-left:4px;font-size:15px;color:#1f3446;white-space:nowrap;position:relative}
.tc-row svg{flex:none;margin-top:1px}
.tc-row .gr{color:#6d8b97}
.tc-row .tl{color:#33839f}
.tc-row .dk{color:#1e3440}
.tc-row.focus{outline:1px dashed #888;outline-offset:-1px;width:240px}
.tc-row.file{color:#1a5fb4}
.tc-name{width:187px}

/* system */
.win-sys{background:#ebebeb}
.sys-cap{height:28px;flex:none}
.sys-client{flex:1;margin:0 6px 6px 0;background:#fff;display:flex;flex-direction:column;min-height:0}
.sys-addr{display:flex;height:21px;margin-top:10px;padding-left:60px;flex:none;gap:13px}
.sys-crumb{width:614px;padding-left:96px;gap:7px}
.sys-search{width:201px}
.sys-main{flex:1;padding:0 12px 0 231px;position:relative}
.sys-h1row{display:flex;justify-content:space-between;height:43px;padding-top:25px;margin-right:-6px}
.sys-h1{font-size:17px;font-weight:400;line-height:24px;color:#1a5fb4}
.sys-help{margin-top:-15px}
.sys-sec{display:flex;align-items:center;height:20px;gap:3px;white-space:nowrap;color:#333}
.sys-sec::after{content:"";flex:1;border-top:2px solid #d8d8d8;margin-top:3px}
.s1{margin-top:14px}
.sys-ver{display:flex;height:73px;padding-left:19px;color:#333;position:relative}
.sys-vertext{width:319px;padding-top:5px;line-height:23px}
.sys-vertext p{white-space:nowrap}
.win8logo{fill:#00ccff;margin-top:6px;flex:none}
.win8text{font:300 46px/60px "Open Sans",sans-serif;color:#00ccff;margin:5px 0 0 17px;white-space:nowrap;letter-spacing:-.5px}
.win8text sup{font-size:8px;vertical-align:26px;line-height:0}
.win8text b{font-weight:300;font-size:50px;margin-left:4px}
.sys-rows{display:grid;grid-template-columns:150px 1fr;grid-auto-rows:23px;padding:4px 0 0 19px;line-height:22px;color:#333;margin:0}
.sys-rows dt,.sys-rows dd{white-space:nowrap;margin:0}
.sys-rows.tight{grid-auto-rows:22px;padding-top:6px}
.sys-rows dd{position:relative}
.s3{margin-top:11px}
.s4{margin-top:11px}
.sys-link{color:#1a6fc4}
.shield{position:absolute;left:376px;top:0;display:flex;align-items:center;gap:2px}
.sys-act{padding:4px 0 0 19px;line-height:22px;color:#333;white-space:nowrap}
.sys-pid{display:flex;justify-content:space-between;padding:7px 31px 0 19px;line-height:22px;color:#333}

/* dialog */
.win-dlg{position:absolute;left:1130px;top:530px;width:442px;height:557px;background:#ecc465;border:1px solid #b89a4f;display:flex;flex-direction:column;padding:0 7px 7px}
.dlg-cap{display:flex;align-items:center;height:31px;flex:none;position:relative;justify-content:center}
.dlg-capico{position:absolute;left:12px;top:9px}
.dlg-title{font-size:15px;color:#3b2f15}
.dlg-close{position:absolute;right:-1px;top:0;width:31px;height:20px;background:#c75050;color:#fff;text-align:center;font:11px/20px "DejaVu Sans",sans-serif}
.dlg-body{flex:1;background:#f0f0f0;border:1px solid #d7c79c;padding:8px 6px 0 7px;display:flex;flex-direction:column;min-height:0}
.dlg-tabs{display:flex;height:22px;align-items:flex-end;flex:none;color:#222}
.dlg-tabs span{display:block;height:20px;line-height:18px;text-align:center;background:linear-gradient(#f4f4f4,#e6e6e6);border:1px solid #bbb;border-bottom:0;margin-right:-1px}
.dlg-tabs span:nth-child(1){width:52px;height:22px;background:#fff;position:relative;z-index:1;line-height:18px;margin-bottom:-1px}
.dlg-tabs span:nth-child(2){width:46px;text-align:left;padding-left:4px}
.dlg-tabs span:nth-child(3){width:61px}
.dlg-tabs span:nth-child(4){width:48px;text-align:left;padding-left:5px}
.dlg-tabs span:nth-child(5){width:48px;text-align:left;padding-left:5px}
.dlg-tabs span:nth-child(6){width:46px}
.dlg-panel{width:409px;height:444px;background:#fff;border:1px solid #a8a8a8;padding:0 21px 0 15px;flex:none;color:#222}
.dlg-name{display:flex;height:62px;padding-top:22px}
.dlg-ico{display:flex;flex-direction:column;width:86px;flex:none;margin-top:-3px}
.cd-logo2{fill:#00bfff;margin-left:2px}
.dlg-input{width:287px;height:26px;border:1px solid #b5b5b5;margin-left:0;margin-right:-21px}
.dlg-panel hr{height:1px;background:#a0a0a0;width:370px}
.dlg-kv{display:grid;grid-template-columns:86px 1fr;margin-top:8px;line-height:16px;height:16px}
.kv2{margin-top:10px}
.ntfs{letter-spacing:.2px}
.h2{margin-top:8px}
.dlg-use{display:grid;grid-template-columns:18px 8px 132px 116px 72px;margin-top:7px;height:17px;line-height:17px;align-items:center}
.dlg-use span:nth-of-type(1){grid-column:3}
.r1,.r2{text-align:right;white-space:nowrap}
.sw{width:18px;height:17px;display:block}
.blue{background:#00f}
.pink{background:#f0f}
.none{background:transparent}
.u2{margin-top:8px}
.h3{margin-top:12px}
.u3{margin-top:9px;height:17px}
.dlg-pie{position:relative;height:111px;padding-left:131px}
.pie{display:block;margin-top:1px}
.pie-foot{display:flex;justify-content:space-between;position:absolute;left:0;right:-1px;top:78px;padding-left:156px;padding-right:0}
.pie-lbl{line-height:16px;padding-top:12px;margin-right:auto}
.clean{width:93px;height:23px;font-size:12px}
.wbtn{display:flex;align-items:center;justify-content:center;background:linear-gradient(#f2f2f2,#e5e5e5);border:1px solid #acacac;color:#222}
.h4{margin-top:0}
.dlg-ck{display:flex;align-items:center;gap:4px;height:16px;margin-top:9px;white-space:nowrap}
.c1{margin-top:37px}
.cbx{display:flex;align-items:center;justify-content:center;width:13px;height:13px;border:1px solid #707070;background:#fff;font:11px/11px "DejaVu Sans",sans-serif;color:#111;flex:none}
.dlg-btns{display:flex;justify-content:flex-end;gap:9px;padding:12px 1px 0 0}
.dlg-btns .wbtn{width:86px;height:23px}
.wbtn.def{border:1px solid #3a8ad6;box-shadow:inset 0 0 0 1px #d9ecfb}

/* clock */
.clock{position:absolute;left:2310px;top:1310px;overflow:visible;pointer-events:none}
.clock-num{font:700 31px "DejaVu Serif",serif;fill:#dcdcdc;stroke:#b8b8b8;stroke-width:.8;filter:drop-shadow(2px 2px 2px rgba(0,0,0,.35))}
.clock-hands path{fill:#d4d4d4;stroke:#9a9a9a;stroke-width:.6}
.clock-hands .sec{fill:none;stroke:#a8a8a8;stroke-width:1;stroke-dasharray:2 1}
```
